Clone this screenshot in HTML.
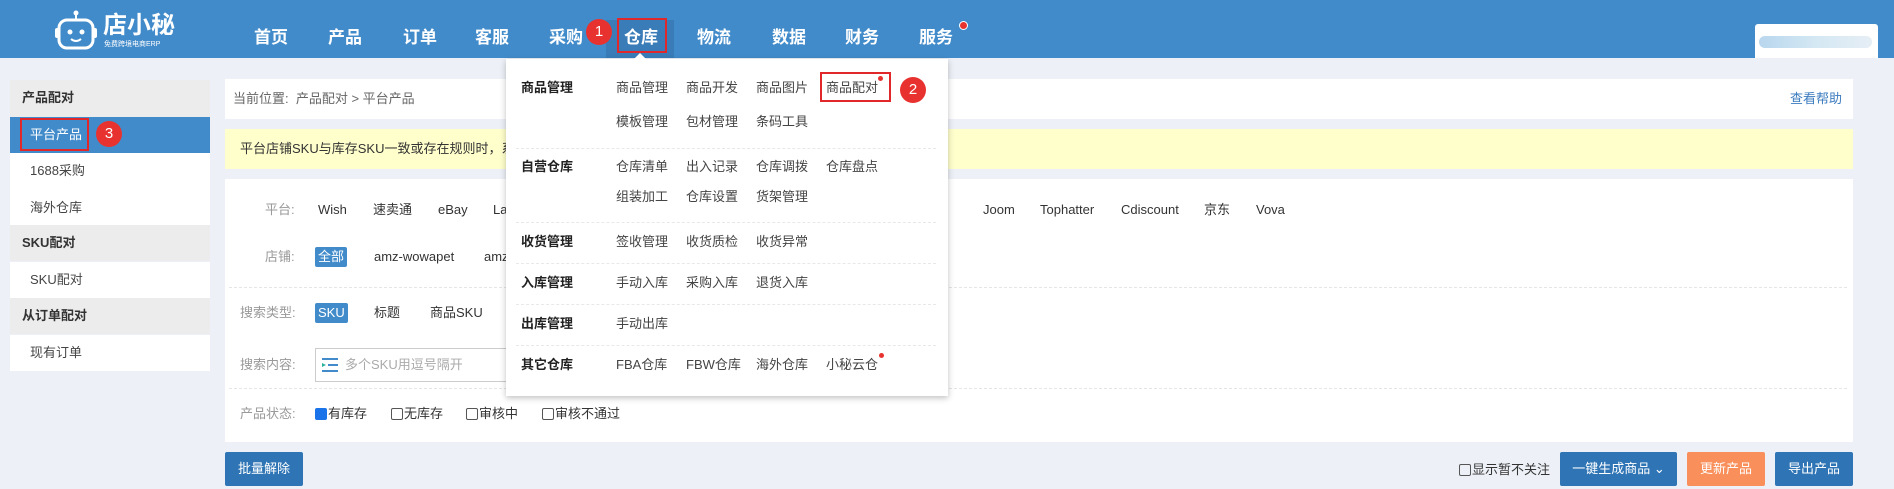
<!DOCTYPE html>
<html><head><meta charset="utf-8"><style>
*{box-sizing:border-box;margin:0;padding:0}
body{width:1894px;height:489px;overflow:hidden;background:#edf1f7;font-family:"Liberation Sans","Noto Sans CJK SC",sans-serif;font-size:13px;line-height:16px;color:#333;position:relative}
.a{position:absolute;white-space:nowrap;line-height:16px}
.hdr{position:absolute;left:0;top:0;width:1894px;height:58px;background:#428bca}
.nav{position:absolute;top:28px;font-size:17px;font-weight:bold;color:#fff;line-height:20px}
.badge{position:absolute;width:26px;height:26px;border-radius:50%;background:#e8322f;color:#fff;font-size:15px;text-align:center;line-height:26px}
.rbox{position:absolute;border:2px solid #e0282a}
.side{position:absolute;left:10px;width:200px;height:36px;line-height:36px;padding-left:20px;background:#fff;color:#444}
.side.h{background:#ececec;padding-left:12px;font-weight:bold;color:#333}
.panel{position:absolute;background:#fff}
.lbl{color:#999}
.tag{position:absolute;background:#428bca;color:#fff;padding:0 3px;height:20px;line-height:20px;border-radius:2px}
.dash{position:absolute;border-top:1px dashed #e5e5e5}
.dd{position:absolute;left:506px;top:59px;width:442px;height:337px;background:#fff;box-shadow:0 2px 6px rgba(0,0,0,.25);font-size:13px;white-space:nowrap}
.dd .r{position:absolute;left:0;width:442px;height:16px;line-height:16px}
.dd b{position:absolute;left:15px;color:#222}
.dd span{position:absolute;color:#444}
.dd .s{position:absolute;left:10px;width:420px;border-top:1px dashed #e8e8e8}
.cb{display:inline-block;width:12px;height:12px;border:1px solid #555;border-radius:2px;vertical-align:-2px;margin-right:1px}
.btn{position:absolute;top:452px;height:34px;line-height:34px;color:#fff;text-align:center;border-radius:2px;font-size:13px}
</style></head><body>
<div class="hdr"></div>
<svg class="a" style="left:54px;top:10px" width="44" height="42" viewBox="0 0 44 42"><line x1="22" y1="2" x2="22" y2="9" stroke="#fff" stroke-width="2"/><circle cx="22" cy="3" r="2.5" fill="#fff"/><rect x="5" y="10" width="34" height="28" rx="8" fill="none" stroke="#fff" stroke-width="3"/><rect x="1" y="18" width="4" height="10" rx="2" fill="#fff"/><rect x="39" y="18" width="4" height="10" rx="2" fill="#fff"/><circle cx="16" cy="22" r="2.5" fill="#fff"/><circle cx="28" cy="22" r="2.5" fill="#fff"/><path d="M17 29 Q22 33 27 29" stroke="#fff" stroke-width="2" fill="none"/></svg>
<div class="a" style="left:103px;top:12px;color:#fff;font-size:24px;font-weight:bold;line-height:28px">店小秘</div>
<div class="a" style="left:104px;top:40px;color:#fff;font-size:7px;line-height:9px">免费跨境电商ERP</div>
<div class="a" style="left:606px;top:20px;width:68px;height:38px;background:#3a7cb8"></div>
<div class="nav" style="left:254px">首页</div><div class="nav" style="left:328px">产品</div><div class="nav" style="left:403px">订单</div><div class="nav" style="left:475px">客服</div><div class="nav" style="left:549px">采购</div><div class="nav" style="left:624px">仓库</div><div class="nav" style="left:697px">物流</div><div class="nav" style="left:772px">数据</div><div class="nav" style="left:845px">财务</div><div class="nav" style="left:919px">服务</div>
<div class="a" style="left:959px;top:21px;width:9px;height:9px;border-radius:50%;background:#e8322f;border:1px solid #fff"></div>
<div class="rbox" style="left:617px;top:18px;width:50px;height:35px"></div>
<div class="badge" style="left:586px;top:19px">1</div>
<div class="a" style="left:1755px;top:24px;width:123px;height:34px;background:#fff;border-radius:3px 3px 0 0"></div>
<div class="a" style="left:1759px;top:36px;width:113px;height:12px;border-radius:6px;background:linear-gradient(90deg,#b8d6ee,#d4e8f3,#e6eef5)"></div>
<div class="side h" style="top:80px;height:37px">产品配对</div>
<div class="side" style="top:117px;background:#428bca;color:#fff;padding-left:20px">平台产品</div>
<div class="rbox" style="left:20px;top:118px;width:69px;height:33px"></div>
<div class="badge" style="left:96px;top:121px">3</div>
<div class="side" style="top:153px;height:37px">1688采购</div>
<div class="side" style="top:190px;height:35px">海外仓库</div>
<div class="side h" style="top:225px;height:36px">SKU配对</div>
<div class="side" style="top:262px">SKU配对</div>
<div class="side h" style="top:298px;height:36px">从订单配对</div>
<div class="side" style="top:335px">现有订单</div>
<div class="panel" style="left:225px;top:79px;width:1628px;height:40px"></div>
<div class="a" style="left:233px;top:91px;color:#666">当前位置:&nbsp; 产品配对 &gt; 平台产品</div>
<div class="a" style="left:1790px;top:91px;color:#3b7bbf">查看帮助</div>
<div class="a" style="left:225px;top:129px;width:1628px;height:40px;background:#ffffcc"></div>
<div class="a" style="left:240px;top:141px;color:#333">平台店铺SKU与库存SKU一致或存在规则时，系</div>
<div class="panel" style="left:225px;top:179px;width:1628px;height:263px"></div>
<div class="a lbl" style="left:265px;top:202px">平台:</div>
<div class="a" style="left:318px;top:202px">Wish</div><div class="a" style="left:373px;top:202px">速卖通</div><div class="a" style="left:438px;top:202px">eBay</div><div class="a" style="left:493px;top:202px">La</div>
<div class="a" style="left:930px;top:202px">ee</div><div class="a" style="left:983px;top:202px">Joom</div><div class="a" style="left:1040px;top:202px">Tophatter</div><div class="a" style="left:1121px;top:202px">Cdiscount</div><div class="a" style="left:1204px;top:202px">京东</div><div class="a" style="left:1256px;top:202px">Vova</div>
<div class="a lbl" style="left:265px;top:249px">店铺:</div>
<div class="tag" style="left:315px;top:247px">全部</div>
<div class="a" style="left:374px;top:249px">amz-wowapet</div><div class="a" style="left:484px;top:249px">amz</div>
<div class="dash" style="left:229px;top:287px;width:1618px"></div>
<div class="a lbl" style="left:240px;top:305px">搜索类型:</div>
<div class="tag" style="left:315px;top:303px">SKU</div>
<div class="a" style="left:374px;top:305px">标题</div><div class="a" style="left:430px;top:305px">商品SKU</div>
<div class="a lbl" style="left:240px;top:357px">搜索内容:</div>
<div class="a" style="left:315px;top:348px;width:200px;height:34px;border:1px solid #ccc"></div>
<svg class="a" style="left:322px;top:358px" width="16" height="14"><rect x="0" y="0" width="16" height="2" fill="#428bca"/><rect x="6" y="6" width="10" height="2" fill="#428bca"/><rect x="0" y="12" width="16" height="2" fill="#428bca"/><path d="M0 5 L4 7 L0 9z" fill="#2bb3a0"/></svg>
<div class="a" style="left:345px;top:357px;color:#aaa">多个SKU用逗号隔开</div>
<div class="dash" style="left:229px;top:388px;width:1618px"></div>
<div class="a lbl" style="left:240px;top:406px">产品状态:</div>
<div class="a" style="left:315px;top:406px"><span class="cb" style="background:#1a73e8;border-color:#1a73e8"></span>有库存</div>
<div class="a" style="left:391px;top:406px"><span class="cb"></span>无库存</div>
<div class="a" style="left:466px;top:406px"><span class="cb"></span>审核中</div>
<div class="a" style="left:542px;top:406px"><span class="cb"></span>审核不通过</div>
<div class="btn" style="left:225px;width:78px;background:#2f75b5">批量解除</div>
<div class="a" style="left:1459px;top:462px"><span class="cb"></span>显示暂不关注</div>
<div class="btn" style="left:1560px;width:117px;background:#2f75b5">一键生成商品 ⌄</div>
<div class="btn" style="left:1687px;width:78px;background:#f98f5a">更新产品</div>
<div class="btn" style="left:1775px;width:78px;background:#2f75b5">导出产品</div>
<div class="dd">
<div class="r" style="top:21px"><b>商品管理</b><span style="left:110px">商品管理</span><span style="left:180px">商品开发</span><span style="left:250px">商品图片</span><span style="left:320px">商品配对</span></div>
<div class="a" style="left:372px;top:17px;width:5px;height:5px;border-radius:50%;background:#e8322f"></div>
<div class="r" style="top:55px"><span style="left:110px">模板管理</span><span style="left:180px">包材管理</span><span style="left:250px">条码工具</span></div>
<div class="s" style="top:89px"></div>
<div class="r" style="top:100px"><b>自营仓库</b><span style="left:110px">仓库清单</span><span style="left:180px">出入记录</span><span style="left:250px">仓库调拨</span><span style="left:320px">仓库盘点</span></div>
<div class="r" style="top:130px"><span style="left:110px">组装加工</span><span style="left:180px">仓库设置</span><span style="left:250px">货架管理</span></div>
<div class="s" style="top:163px"></div>
<div class="r" style="top:175px"><b>收货管理</b><span style="left:110px">签收管理</span><span style="left:180px">收货质检</span><span style="left:250px">收货异常</span></div>
<div class="s" style="top:204px"></div>
<div class="r" style="top:216px"><b>入库管理</b><span style="left:110px">手动入库</span><span style="left:180px">采购入库</span><span style="left:250px">退货入库</span></div>
<div class="s" style="top:245px"></div>
<div class="r" style="top:257px"><b>出库管理</b><span style="left:110px">手动出库</span></div>
<div class="s" style="top:286px"></div>
<div class="r" style="top:298px"><b>其它仓库</b><span style="left:110px">FBA仓库</span><span style="left:180px">FBW仓库</span><span style="left:250px">海外仓库</span><span style="left:320px">小秘云仓</span></div>
<div class="a" style="left:373px;top:294px;width:5px;height:5px;border-radius:50%;background:#e8322f"></div>
</div>
<div class="a" style="left:634px;top:53px;width:0;height:0;border:6px solid transparent;border-bottom-color:#fff;border-top:0"></div>
<div class="rbox" style="left:820px;top:72px;width:71px;height:30px"></div>
<div class="badge" style="left:900px;top:77px">2</div>
</body></html>
